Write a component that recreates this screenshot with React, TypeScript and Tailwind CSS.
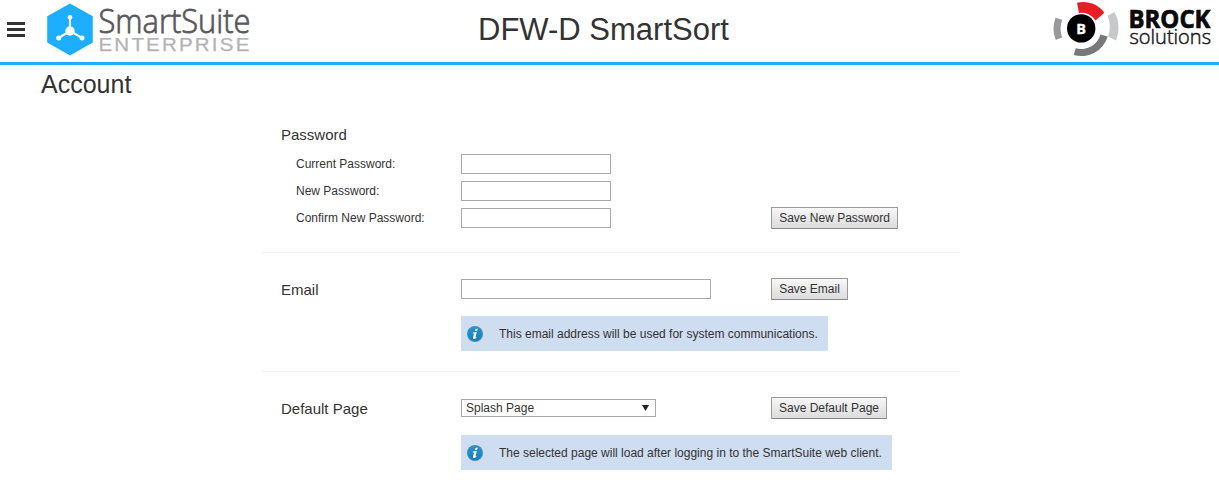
import type { ReactNode } from "react";

function SmartSuiteLogo() {
  return (
    <svg width="206" height="56" viewBox="46 2 206 56" className="block overflow-visible" role="img" aria-label="SmartSuite Enterprise">
      <path d="M70 3.5 92.8 16.3V42.4L70 55.5 47.2 42.4V16.3Z" fill="#1eaeff" />
      <path d="M70 31V17.5M70 31 58.800 37.800M70 31 82 37.800" stroke="#fff" strokeWidth="2.100" fill="none" />
      <g fill="#fff">
        <circle cx="70" cy="31" r="4.700" />
        <circle cx="70" cy="17.300" r="2.300" />
        <circle cx="58.700" cy="37.900" r="2.500" />
        <circle cx="82" cy="37.900" r="2.500" />
      </g>
      <text x="98.500" y="33.300" textLength="152" lengthAdjust="spacingAndGlyphs" fill="#58595b" stroke="#58595b" strokeWidth="0.800" fontSize="33" fontWeight="300" fontFamily="'Open Sans', 'Noto Sans', sans-serif">SmartSuite</text>
      <text x="98.500" y="50.500" textLength="153" lengthAdjust="spacingAndGlyphs" fill="#b3b3b3" stroke="#b3b3b3" strokeWidth="0.250" fontSize="18.500" letterSpacing="2" fontFamily="'Liberation Sans', Arial, sans-serif">ENTERPRISE</text>
    </svg>
  );
}

function BrockLogo() {
  return (
    <svg width="162" height="58" viewBox="1051 0 162 58" className="block overflow-visible" role="img" aria-label="Brock Solutions">
      <path d="M1077 2.800A26 26 0 0 1 1104.300 12.700L1095.500 20.500A16 16 0 0 0 1079 13Z" fill="#ec1c24" />
      <path d="M1107.700 15.700 1114.600 12A34 34 0 0 1 1116 40.500L1108.200 36.500A30 30 0 0 0 1107.700 15.700Z" fill="#c7c8ca" />
      <path d="M1107.700 36.500A27.500 27.500 0 0 1 1073.700 55L1075.700 48.300A20 20 0 0 0 1100.500 34.500Z" fill="#77787b" />
      <path d="M1055.500 17.700 1062.100 19.800A28 28 0 0 0 1062.100 37.600L1055.700 39.900A31 31 0 0 1 1055.500 17.700Z" fill="#97999c" />
      <circle cx="1081.200" cy="28.400" r="14.200" fill="#000" />
      <text x="1081.200" y="33.500" textAnchor="middle" fill="#fff" stroke="#fff" strokeWidth="0.300" fontSize="14.500" fontWeight="700" fontFamily="'Open Sans', sans-serif">B</text>
      <text x="1128.500" y="28" textLength="82" lengthAdjust="spacingAndGlyphs" fill="#0a0a0a" stroke="#0a0a0a" strokeWidth="0.700" fontSize="24.500" fontWeight="700" fontFamily="'Open Sans', sans-serif">BROCK</text>
      <text x="1129.500" y="44.300" textLength="81.500" lengthAdjust="spacingAndGlyphs" fill="#1a1a1a" stroke="#1a1a1a" strokeWidth="0.500" fontSize="20" fontWeight="300" fontFamily="'Open Sans', sans-serif">solutions</text>
    </svg>
  );
}

function InfoIcon() {
  return (
    <svg width="16" height="16" viewBox="0 0 16 16" className="block" aria-hidden="true">
      <defs>
        <linearGradient id="info-fill" x1="0" y1="0" x2="0" y2="1">
          <stop offset="0" stopColor="#2794ca" />
          <stop offset="1" stopColor="#1b7bbd" />
        </linearGradient>
      </defs>
      <circle cx="8" cy="8" r="8" fill="#3f8fb9" />
      <circle cx="8" cy="8" r="6.900" fill="url(#info-fill)" />
      <path d="M8.500 2.900 10.700 2.500 10.200 4.700 8 5ZM6 6.500 9.800 6 8.400 11.400 9.700 10.900 9.300 12Q5.600 14.200 6 11.800L7.100 7.500 5.700 7.600Z" fill="#fff" />
    </svg>
  );
}

function Info({ children }: { children: ReactNode }) {
  return (
    <div className="flex h-[35px] w-fit items-center whitespace-nowrap bg-[#cfddf0] pl-[6px] pr-[10px]">
      <InfoIcon />
      <span className="ml-4">{children}</span>
    </div>
  );
}

function SaveButton({ children, className }: { children: ReactNode; className: string }) {
  return (
    <button type="button" className={`h-[22px] whitespace-nowrap rounded-[1px] border border-[#999] border-b-[#888] bg-linear-to-b from-[#f7f7f7] to-[#dcdcdc] text-center leading-[20px] ${className}`}>
      {children}
    </button>
  );
}

const field = "block h-5 border border-[#a9a9a9] bg-white px-1 outline-none";
const row = "grid grid-cols-[200px_310px_auto]";

export default function App() {
  return (
    <div className="h-[484px] overflow-hidden bg-white font-['Liberation_Sans',Arial,sans-serif] text-[12px] leading-[14px] text-[#333]">
      <header className="flex h-[65px] border-b-[3px] border-[#1eaeff]">
        <div className="flex w-[478px] shrink-0">
          <button type="button" aria-label="Menu" className="ml-[7px] mt-[22px] flex h-[15px] w-[18px] flex-col justify-between">
            <span className="h-[3px] w-full bg-[#333]" />
            <span className="h-[3px] w-full bg-[#333]" />
            <span className="h-[3px] w-full bg-[#333]" />
          </button>
          <div className="ml-[21px] mt-[2px]"><SmartSuiteLogo /></div>
        </div>
        <h1 className="mt-[12px] w-[573px] whitespace-nowrap text-[31px] leading-[36px]">DFW-D SmartSort</h1>
        <BrockLogo />
      </header>
      <main>
        <h2 className="ml-[41px] h-[55px] pt-[5px] text-[25px] leading-[29px]">Account</h2>
        <div className="ml-[261px] w-[699px]">
          <section className="h-[133px] border-b border-[#f2f2f2] pt-[6px]">
            <h3 className="ml-5 h-[28px] text-[15px] leading-[18px]">Password</h3>
            <div className="flex flex-col gap-[7px]">
              <div className={row}>
                <label htmlFor="current" className="pl-[35px] pt-[3px]">Current Password:</label>
                <input id="current" type="password" className={`${field} w-[150px]`} />
              </div>
              <div className={row}>
                <label htmlFor="new" className="pl-[35px] pt-[3px]">New Password:</label>
                <input id="new" type="password" className={`${field} w-[150px]`} />
              </div>
              <div className={row}>
                <label htmlFor="confirm" className="pl-[35px] pt-[3px]">Confirm New Password:</label>
                <input id="confirm" type="password" className={`${field} w-[150px]`} />
                <div className="-mt-px h-5"><SaveButton className="w-[127px]">Save New Password</SaveButton></div>
              </div>
            </div>
          </section>
          <section className="h-[119px] border-b border-[#f2f2f2] pt-[25px]">
            <div className={`${row} h-[38px]`}>
              <h3 className="pl-5 pt-[3px] text-[15px] leading-[18px]">Email</h3>
              <input aria-label="Email" type="email" className={`${field} mt-px w-[250px]`} />
              <SaveButton className="w-[77px]">Save Email</SaveButton>
            </div>
            <div className="ml-[200px]"><Info>This email address will be used for system communications.</Info></div>
          </section>
          <section className="pt-[25px]">
            <div className={`${row} h-[38px]`}>
              <h3 className="pl-5 pt-[3px] text-[15px] leading-[18px]">Default Page</h3>
              <button type="button" aria-haspopup="listbox" className="mt-[2px] flex h-[18px] w-[195px] items-center justify-between border border-[#a9a9a9] bg-white pl-1 pr-[6px]">
                <span>Splash Page</span>
                <svg width="7" height="6" viewBox="0 0 7 6" aria-hidden="true"><path d="M0 0H7L3.500 6Z" fill="#222" /></svg>
              </button>
              <SaveButton className="w-[116px]">Save Default Page</SaveButton>
            </div>
            <div className="ml-[200px]"><Info>The selected page will load after logging in to the SmartSuite web client.</Info></div>
          </section>
        </div>
      </main>
    </div>
  );
}
